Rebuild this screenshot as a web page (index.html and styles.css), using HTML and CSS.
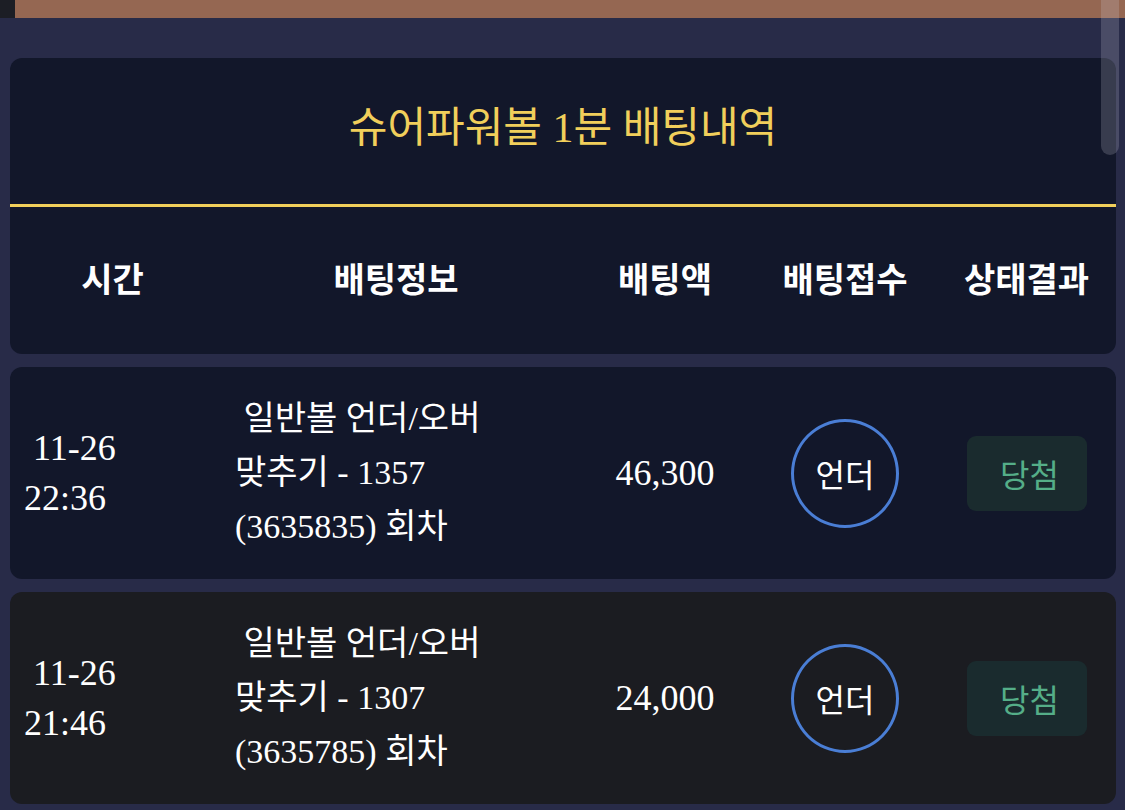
FILE: index.html
```html
<!DOCTYPE html>
<html>
<head>
    <meta charset="utf-8">
    <title>슈어파워볼 1분 배팅내역</title>
    <link rel="stylesheet" href="styles.css">
</head>
<body>
    <div class="topstrip">
        <div class="banner"></div>
    </div>
    <div class="scroll-thumb"></div>

    <main class="history">
        <section class="card head">
            <h2 class="title">슈어파워볼 1분 배팅내역</h2>
            <div class="grid cols">
                <div>시간</div>
                <div>배팅정보</div>
                <div>배팅액</div>
                <div>배팅접수</div>
                <div>상태결과</div>
            </div>
        </section>

        <div class="card grid row">
            <div class="time">&nbsp;11-26<br>22:36</div>
            <div class="info">&nbsp;일반볼 언더/오버 맞추기 - 1357 (3635835) 회차</div>
            <div class="amount">46,300</div>
            <div class="pick"><span class="ball">언더</span></div>
            <div class="result"><span class="badge">당첨</span></div>
        </div>

        <div class="card grid row dark">
            <div class="time">&nbsp;11-26<br>21:46</div>
            <div class="info">&nbsp;일반볼 언더/오버 맞추기 - 1307 (3635785) 회차</div>
            <div class="amount">24,000</div>
            <div class="pick"><span class="ball">언더</span></div>
            <div class="result"><span class="badge">당첨</span></div>
        </div>
    </main>
</body>
</html>
```

FILE: styles.css
```css
body {
    background: #282b48;
    color: #ffffff;
    font-family: "Liberation Serif", "Noto Sans CJK KR", serif;
    margin: 0;
    overflow: hidden;
    word-break: keep-all;
}

.topstrip {
    background: #1c1e25;
}

.banner {
    background: #956752;
    height: 18px;
    margin-left: 15px;
}

/* overlay scrollbar of the phone browser */
.scroll-thumb {
    background: rgba(210, 210, 225, 0.2);
    border-radius: 0 0 9px 9px;
    height: 155px;
    position: absolute;
    right: 6px;
    top: 0;
    width: 18px;
}

.history {
    display: flex;
    flex-direction: column;
    gap: 13px;
    padding: 40px 9px 0 10px;
}

.card {
    background: #12172a;
    border-radius: 12px;
}

.card.dark {
    background: #1b1c21;
}

.title {
    border-bottom: 3px solid #f1cf5b;
    color: #f1cf5b;
    font-size: 42px;
    font-weight: normal;
    height: 146px;
    line-height: 140px;
    margin: 0;
    text-align: center;
}

.grid {
    align-items: center;
    display: grid;
    grid-template-columns: 205px 362px 176px 184px 1fr;
}

.cols {
    box-sizing: border-box;
    font-size: 34px;
    font-weight: bold;
    height: 147px;
    padding-bottom: 6px;
    text-align: center;
}

.row {
    height: 212px;
}

.time {
    font-size: 36px;
    line-height: 50px;
    padding-left: 14px;
}

.info {
    font-size: 34px;
    line-height: 54px;
    padding-left: 20px;
    width: 280px;
}

.amount {
    font-size: 36px;
    text-align: center;
}

.pick,
.result {
    display: flex;
    justify-content: center;
}

.ball {
    align-items: center;
    border: 3px solid #4a7ed5;
    border-radius: 50%;
    box-sizing: border-box;
    display: flex;
    font-size: 32px;
    height: 109px;
    justify-content: center;
    width: 108px;
}

.badge {
    align-items: center;
    background: #1a2b2e;
    border-radius: 9px;
    box-sizing: border-box;
    color: #55ae88;
    display: flex;
    font-size: 32px;
    height: 75px;
    justify-content: center;
    padding-left: 6px;
    width: 120px;
}
```
